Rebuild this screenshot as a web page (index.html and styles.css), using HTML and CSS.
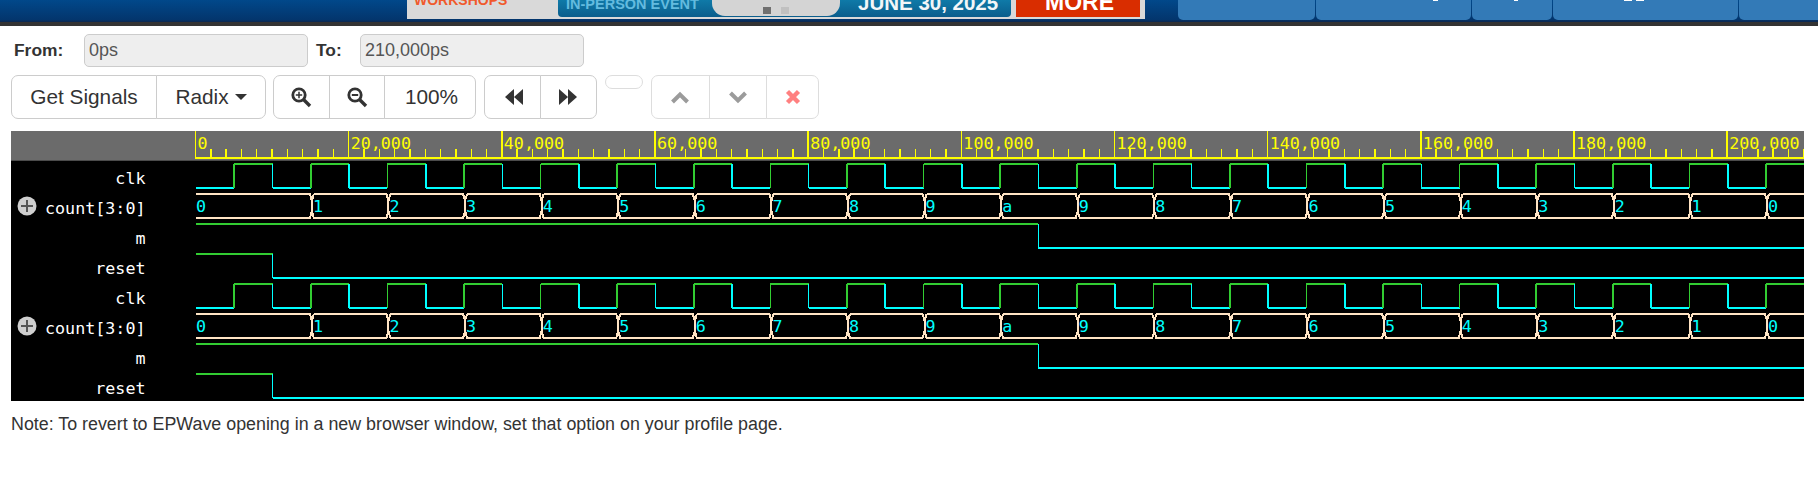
FILE: index.html
```html
<!DOCTYPE html>
<html lang="en">
<head>
	<meta charset="UTF-8">
	<title>EPWave</title>
	<link rel="stylesheet" href="styles.css">
</head>
<body>
	<header class="topbar">
		<div class="banner">
			<div class="banner_left"><span>WORKSHOPS</span></div>
			<div class="banner_teal">
				<span class="banner_event">IN-PERSON EVENT</span>
				<div class="banner_pill"><i class="dot dark"></i><i class="dot"></i></div>
				<span class="banner_date">JUNE 30, 2025</span>
			</div>
			<div class="banner_more"><span>MORE</span></div>
		</div>
		<nav class="tabs">
			<div class="tab tab1"></div>
			<div class="tab tab2"><i class="mark m2"></i></div>
			<div class="tab tab3"><i class="mark m3"></i></div>
			<div class="tab tab4"><i class="mark m4"></i><i class="mark m5"></i></div>
			<div class="tab tab5"></div>
		</nav>
	</header>

	<main class="page">
		<div class="range_row">
			<label class="range_label from">From:</label>
			<input class="range_input" type="text" value="0ps" readonly>
			<label class="range_label to">To:</label>
			<input class="range_input" type="text" value="210,000ps" readonly>
		</div>

		<div class="toolbar">
			<div class="btn_group first">
				<button type="button" class="btn w_signals">Get Signals</button>
				<button type="button" class="btn w_radix">Radix <span class="caret"></span></button>
			</div>
			<div class="btn_group">
				<button type="button" class="btn w_icon">
					<svg class="icon" viewBox="0 0 22 22"><circle cx="9" cy="9" r="6.2" fill="none" stroke="#333" stroke-width="2.8"/><path d="M13.5 13.5L20 20" stroke="#333" stroke-width="3.4"/><path d="M5.8 9h6.4M9 5.8v6.4" stroke="#333" stroke-width="1.5"/></svg>
				</button>
				<button type="button" class="btn w_icon">
					<svg class="icon" viewBox="0 0 22 22"><circle cx="9" cy="9" r="6.2" fill="none" stroke="#333" stroke-width="2.8"/><path d="M13.5 13.5L20 20" stroke="#333" stroke-width="3.4"/><path d="M5.8 9h6.4" stroke="#333" stroke-width="2"/></svg>
				</button>
				<button type="button" class="btn w_zoom">100%</button>
			</div>
			<div class="btn_group">
				<button type="button" class="btn w_icon nudge">
					<svg class="icon" viewBox="0 0 22 22"><path d="M2 11L11 3v16zM11 11l9-8v16z" fill="#333"/></svg>
				</button>
				<button type="button" class="btn w_step">
					<svg class="icon" viewBox="0 0 22 22"><path d="M2 3l9 8-9 8zM11 3l9 8-9 8z" fill="#333"/></svg>
				</button>
			</div>
			<button type="button" class="btn btn_empty"></button>
			<div class="btn_group disabled">
				<button type="button" class="btn w_move">
					<svg class="icon" viewBox="0 0 22 22"><path d="M3.500 16L11 8.500 18.500 16" fill="none" stroke="#666" stroke-width="4"/></svg>
				</button>
				<button type="button" class="btn w_move">
					<svg class="icon" viewBox="0 0 22 22"><path d="M3.500 7L11 14.500 18.500 7" fill="none" stroke="#666" stroke-width="4"/></svg>
				</button>
				<button type="button" class="btn w_close">
					<svg class="icon" viewBox="0 0 22 22"><path d="M5.500 5.500l11 11M16.500 5.500l-11 11" fill="none" stroke="#ff3d3d" stroke-width="4.400"/></svg>
				</button>
			</div>
		</div>

		<svg id="wave" class="wave" width="1793" height="270" viewBox="0 0 1793 270"></svg>

		<p class="note">Note: To revert to EPWave opening in a new browser window, set that option on your profile page.</p>
	</main>

	<script src="wave.js"></script>
</body>
</html>
```

FILE: styles.css
```css
* {
	box-sizing: border-box;
}
body {
	margin: 0;
	background: #fff;
	color: #333;
	font-family: "Liberation Sans", Arial, sans-serif;
	font-size: 16.24px;
}

/* top bar */
.topbar {
	display: flex;
	height: 26px;
	padding-left: 407px;
	background: linear-gradient(#01488a, #03356c 20px, #0a2a55 21px);
	border-bottom: 4px solid #333;
	overflow: hidden;
}
.banner {
	display: flex;
	width: 738px;
	height: 19px;
	background: #d9d9d9;
	overflow: hidden;
}
.banner_left {
	display: flex;
	align-items: flex-end;
	width: 151px;
	height: 19px;
	padding: 0 0 12px 7px;
	color: #f0592b;
	font-size: 14px;
	font-weight: bold;
	line-height: 1;
}
.banner_teal {
	display: flex;
	align-items: flex-start;
	width: 453px;
	height: 17px;
	background: linear-gradient(#0f7aa8, #0a5d8c);
	border-radius: 0 0 4px 4px;
	font-weight: bold;
	font-size: 14.500px;
}
.banner_event {
	width: 154px;
	padding-left: 8px;
	margin-top: -4px;
	color: #63bbdf;
	white-space: nowrap;
}
.banner_pill {
	display: flex;
	justify-content: center;
	gap: 10px;
	width: 128px;
	height: 16px;
	padding-top: 7px;
	background: #d4d4d4;
	border-radius: 0 0 13px 13px;
}
.dot {
	width: 8px;
	height: 7px;
	background: #c0c0c0;
}
.dot.dark {
	background: #707070;
}
.banner_date {
	padding-left: 18px;
	margin-top: -9px;
	color: #f2f6f8;
	white-space: nowrap;
	font-size: 20.500px;
}
.banner_more {
	width: 124px;
	height: 17px;
	margin-left: 5px;
	padding-left: 29px;
	background: #d92d00;
	color: #fff;
	font-size: 23px;
	font-weight: bold;
	line-height: 5px;
}
.tabs {
	display: flex;
	gap: 1px;
	margin-left: 33px;
	flex: 1;
}
.tab {
	display: flex;
	align-items: flex-start;
	height: 20px;
	background: #337ab7;
	border-radius: 0 0 5px 5px;
}
.tab1 { width: 137px; }
.tab2 { width: 155px; }
.tab3 { width: 80px; }
.tab4 { width: 185px; }
.tab5 { flex: 1; border-radius: 0 0 0 5px; }
.mark {
	height: 1px;
	background: #fff;
}
.m2 { width: 5px; margin-left: 117px; }
.m3 { width: 4px; margin-left: 42px; }
.m4 { width: 8px; margin-left: 71px; }
.m5 { width: 8px; margin-left: 4px; }

/* controls */
.page {
	padding-left: 11px;
}
.range_row {
	display: flex;
	align-items: center;
	height: 33px;
	margin-top: 8px;
}
.range_label {
	font-size: 17.400px;
	font-weight: bold;
}
.from {
	width: 73px;
	padding-left: 3px;
}
.to {
	width: 52px;
	padding-left: 8px;
}
.range_input {
	width: 224px;
	height: 33px;
	padding: 0 4px;
	background: #eee;
	border: 1px solid #ccc;
	border-radius: 5px;
	color: #555;
	font-family: inherit;
	font-size: 18px;
}
.toolbar {
	display: flex;
	align-items: flex-start;
	gap: 8px;
	margin-top: 8px;
}
.btn_group {
	display: flex;
	height: 44px;
}
.btn_group.first {
	margin-right: -1px;
}
.btn {
	display: flex;
	align-items: center;
	justify-content: center;
	gap: 6px;
	height: 100%;
	padding: 0;
	background: #fff;
	border: 1px solid #ccc;
	margin-left: -1px;
	color: #333;
	font-family: inherit;
	font-size: 20.8px;
}
.btn_group .btn:first-child {
	margin-left: 0;
	border-radius: 7px 0 0 7px;
}
.btn_group .btn:last-child {
	border-radius: 0 7px 7px 0;
}
.w_signals { width: 146px; }
.w_radix { width: 110px; }
.w_icon { width: 56.500px; }
.w_zoom { width: 92px; padding-left: 3px; }
.w_step { width: 57.500px; }
.w_move { width: 58.500px; }
.w_close { width: 53px; }
.nudge { padding-left: 3px; }
.btn_empty {
	width: 38px;
	height: 14px;
	margin-left: 0;
	border-radius: 7px;
	opacity: 0.65;
}
.disabled {
	opacity: 0.65;
}
.caret {
	width: 0;
	height: 0;
	border-top: 6px solid #333;
	border-left: 6px solid transparent;
	border-right: 6px solid transparent;
}
.icon {
	width: 22px;
	height: 22px;
}

/* waveform */
.wave {
	display: block;
	margin-top: 12px;
	background: #000;
	font-family: "DejaVu Sans Mono", monospace;
}
.note {
	margin: 13px 0 0;
	font-size: 17.850px;
	line-height: 20px;
}
```

FILE: wave.js
```js
// draws the EPWave ruler and signals into the svg
const X0 = 185;
const STEP = 76.585; // px per 10,000ps
const WIDTH = 1793;
const RULER = 29.7;
const FONT = 16.7;

const GREEN = "#32cd32";
const CYAN = "#00ffff";
const BISQUE = "#ffe4c4";
const YELLOW = "#ffff00";

function line(x1, y1, x2, y2, color, w) {
	return '<line x1="' + x1 + '" y1="' + y1 + '" x2="' + x2 + '" y2="' + y2
		+ '" stroke="' + color + '" stroke-width="' + w + '" shape-rendering="crispEdges"/>';
}

function text(x, y, str, color, anchor) {
	return '<text x="' + x + '" y="' + y + '" fill="' + color + '" font-size="' + FONT
		+ '" text-anchor="' + (anchor || "start") + '">' + str + '</text>';
}

function drawRuler() {
	let out = '<rect width="' + WIDTH + '" height="' + RULER + '" fill="#6b6b6b"/>';
	out += line(184, 27, WIDTH, 27, YELLOW, 2);
	for (let i = 0; i <= 105; i++) {
		const x = 184.5 + i * STEP / 5;
		if (i % 10 == 0) {
			out += line(x, 0, x, 27, YELLOW, 1.6);
			const label = (i * 2000).toLocaleString("en-US");
			out += text(x + 2, 17.5, label, YELLOW);
		} else {
			out += line(x, 18, x, 27, YELLOW, 1.4);
		}
	}
	return out;
}

// levels: array of [startX, 0 or 1], the last one runs to the right edge
function drawLevels(levels, yHigh, yLow) {
	let out = "";
	for (let i = 0; i < levels.length; i++) {
		const x1 = levels[i][0];
		const x2 = i + 1 < levels.length ? levels[i + 1][0] : WIDTH;
		const high = levels[i][1] == 1;
		out += line(x1, high ? yHigh : yLow, x2, high ? yHigh : yLow, high ? GREEN : CYAN, 2);
		if (i > 0) {
			out += line(x1, yHigh, x1, yLow, high ? GREEN : CYAN, 1.6);
		}
	}
	return out;
}

function drawClock(y) {
	const levels = [];
	let value = 0;
	for (let x = X0; x < WIDTH; x += STEP / 2) {
		levels.push([x, value]);
		value = 1 - value;
	}
	return drawLevels(levels, y, y + 24);
}

function drawBus(y) {
	const values = ["0", "1", "2", "3", "4", "5", "6", "7", "8", "9", "a", "9", "8", "7", "6", "5", "4", "3", "2", "1", "0"];
	let out = "";
	for (let i = 0; i < values.length; i++) {
		const a = i == 0 ? X0 : X0 + STEP * (i + 0.5);
		const b = Math.min(X0 + STEP * (i + 1.5), WIDTH + 10);
		const start = i == 0 ? a : a + 3;
		let d = "M" + start + " " + y + "H" + (b - 1) + "L" + (b + 1) + " " + (y + 7)
			+ "V" + (y + 17) + "L" + (b - 1) + " " + (y + 24) + "H" + start;
		if (i > 0) {
			d += "L" + (a + 1) + " " + (y + 17) + "V" + (y + 7) + "L" + start + " " + y;
		}
		out += '<path d="' + d + '" fill="none" stroke="' + BISQUE + '" stroke-width="2" shape-rendering="crispEdges"/>';
		out += text(i == 0 ? a : a + 2, y + 18, values[i], CYAN);
	}
	return out;
}

function drawPlus(y) {
	return '<circle cx="16" cy="' + y + '" r="9.5" fill="#cfcfcf"/>'
		+ '<path d="M10 ' + y + 'h12M16 ' + (y - 6) + 'v12" stroke="#555" stroke-width="2"/>';
}

function drawSet(top) {
	const labelX = 134.5;
	let out = "";
	out += text(labelX, top + 20, "clk", "#fff", "end");
	out += text(labelX, top + 50, "count[3:0]", "#fff", "end");
	out += text(labelX, top + 80, "m", "#fff", "end");
	out += text(labelX, top + 110, "reset", "#fff", "end");
	out += drawPlus(top + 42);
	out += drawClock(top);
	out += drawBus(top + 30);
	out += drawLevels([[X0, 1], [X0 + STEP * 11, 0]], top + 60, top + 84);
	out += drawLevels([[X0, 1], [X0 + STEP, 0]], top + 90, top + 114);
	return out;
}

document.getElementById("wave").innerHTML = drawRuler() + drawSet(33) + drawSet(153);
```
